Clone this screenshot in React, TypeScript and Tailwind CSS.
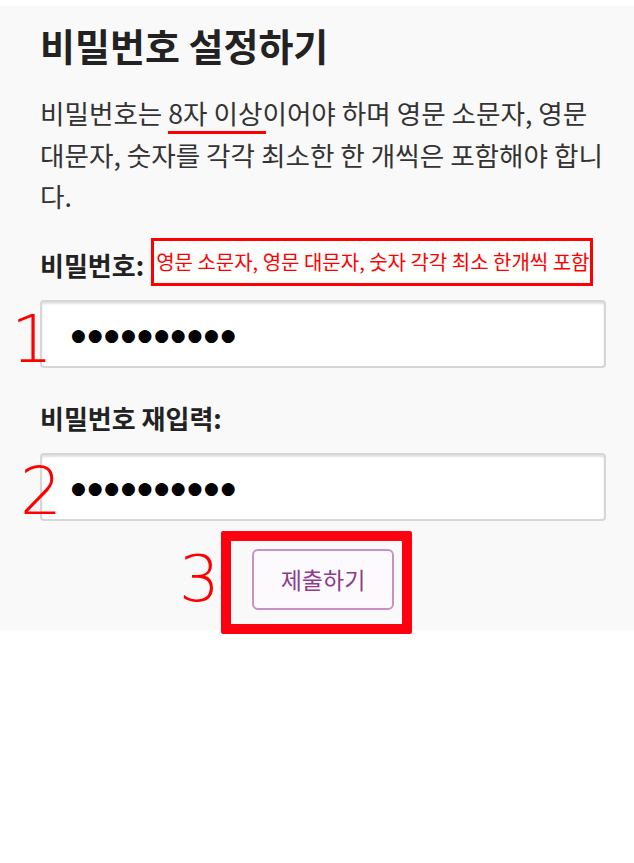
import React from "react";

const KR = { fontFamily: '"Noto Sans CJK KR", "Noto Sans", sans-serif' };
const NUM = { fontFamily: '"DejaVu Sans", sans-serif' };

function PwInput({ n, numClass }: { n: string; numClass: string }) {
  return (
    <div className="relative">
      <input
        type="text"
        readOnly
        value="●●●●●●●●●●"
        className="block w-full h-[68px] rounded-[4px] border-2 border-[#d6d6d6] bg-white pl-[29px] pt-[3px] text-[17px] tracking-[1.8px] text-black shadow-[inset_0_2px_2px_rgba(0,0,0,0.12)] outline-none"
        style={{ fontFamily: '"DejaVu Sans", sans-serif' }}
      />
      <span
        className={`absolute text-[66px] leading-none font-extralight text-[#ff0000] ${numClass}`}
        style={NUM}
      >
        {n}
      </span>
    </div>
  );
}

export default function App() {
  return (
    <div className="min-h-[863px] bg-white pt-[6px]" style={KR}>
      <div className="bg-[#f9f9f9] pl-10 pr-7 pt-[16px] pb-[20px]">
        <h1 className="text-[38px] leading-[46px] font-bold text-[#222222]">
          비밀번호 설정하기
        </h1>
        <p className="mt-[24px] text-[26.6px] leading-[41.5px] text-[#333333]">
          비밀번호는{" "}
          <span className="relative">
            8자 이상
            <span className="absolute left-0 right-[-4px] top-[38px] h-[3px] bg-[#ff0000]" />
          </span>
          이어야 하며 영문 소문자, 영문 대문자, 숫자를 각각 최소한 한 개씩은 포함해야 합니다.
        </p>
        <div className="mt-[21px] flex items-center gap-[7px]">
          <label className="text-[26px] font-bold text-[#222222] pt-[6px]">비밀번호:</label>
          <div className="flex h-[48px] w-[442px] items-center border-[3px] border-[#ff0000] bg-[#fffffe] pl-[2px] text-[20px] text-[#ff0000] whitespace-nowrap">
            영문 소문자, 영문 대문자, 숫자 각각 최소 한개씩 포함
          </div>
        </div>
        <div className="mt-[14px]">
          <PwInput n="1" numClass="left-[-29px] top-[7px]" />
        </div>
        <label className="mt-[34px] block text-[26px] leading-[32px] font-bold text-[#222222]">
          비밀번호 재입력:
        </label>
        <div className="mt-[19px]">
          <PwInput n="2" numClass="left-[-20px] top-[6px]" />
        </div>
        <div className="mt-[28px] flex justify-center">
          <div className="relative">
            <button className="h-[61px] w-[142px] rounded-[6px] border-2 border-[#c992c4] bg-[#fcfafc] text-[23px] text-[#8e3a8c]">
              제출하기
            </button>
            <div className="pointer-events-none absolute left-[-31px] top-[-18px] right-[-18px] bottom-[-24px] rounded-[2px] border-[10px] border-[#ff0010]" />
            <span
              className="absolute left-[-73px] top-[-2px] text-[64px] leading-none font-extralight text-[#ff0000]"
              style={NUM}
            >
              3
            </span>
          </div>
        </div>
      </div>
    </div>
  );
}
